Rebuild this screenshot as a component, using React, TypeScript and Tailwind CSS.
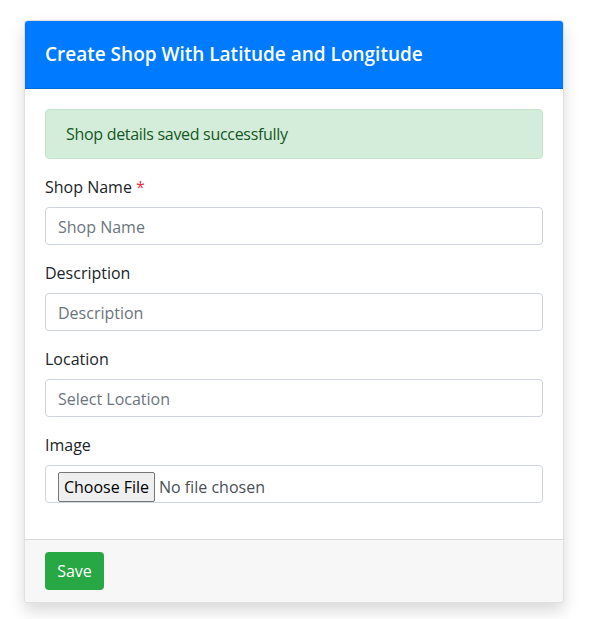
import React from "react";

function Field({ label, placeholder, required }: { label: string; placeholder: string; required?: boolean }) {
  return (
    <div className="mb-4">
      <label className="block mb-2 text-[16px] leading-6 text-[#212529]">
        {label}
        {required && <span className="text-[#dc3545]"> *</span>}
      </label>
      <input
        type="text"
        placeholder={placeholder}
        className="block w-full h-[38px] px-3 pt-[7px] pb-[5px] text-[16px] leading-6 text-[#495057] bg-white border border-[#ced4da] rounded-[4px] placeholder:text-[#6c757d] outline-none"
      />
    </div>
  );
}

export default function App() {
  return (
    <div className="w-[596px] h-[619px] bg-white pt-5 pl-[24px]" style={{ fontFamily: "'Open Sans', 'Noto Sans', sans-serif" }}>
      <div className="w-[540px] bg-white border border-[rgba(0,0,0,0.125)] rounded-[4px] shadow-[0_8px_16px_rgba(0,0,0,0.15)] overflow-hidden">
        <div className="h-[68px] bg-[#007bff] border-b border-[#0069d9] flex items-center px-5">
          <h4 className="text-[19px] font-semibold text-white">Create Shop With Latitude and Longitude</h4>
        </div>
        <div className="p-5">
          <div className="mb-4 h-[50px] flex items-center px-5 bg-[#d4edda] border border-[#c3e6cb] rounded-[4px] text-[#155724] text-[16px] tracking-[-0.3px]">
            Shop details saved successfully
          </div>
          <Field label="Shop Name" placeholder="Shop Name" required />
          <Field label="Description" placeholder="Description" />
          <Field label="Location" placeholder="Select Location" />
          <div className="mb-4">
            <label className="block mb-2 text-[16px] leading-6 text-[#212529]">Image</label>
            <div className="h-[38px] flex items-start pt-[6px] px-3 border border-[#ced4da] rounded-[4px] bg-white">
              <span className="h-[30px] w-[97px] flex items-center justify-center bg-[#efefef] border border-[#767676] rounded-[2px] text-[16px] text-black">
                Choose File
              </span>
              <span className="ml-1 h-[30px] leading-[30px] text-[16px] text-[#495057]">No file chosen</span>
            </div>
          </div>
        </div>
        <div className="bg-[#f7f7f7] border-t border-[rgba(0,0,0,0.125)] px-5 py-3">
          <button className="h-[38px] w-[59px] bg-[#28a745] text-white text-[16px] rounded-[4px]">Save</button>
        </div>
      </div>
    </div>
  );
}
